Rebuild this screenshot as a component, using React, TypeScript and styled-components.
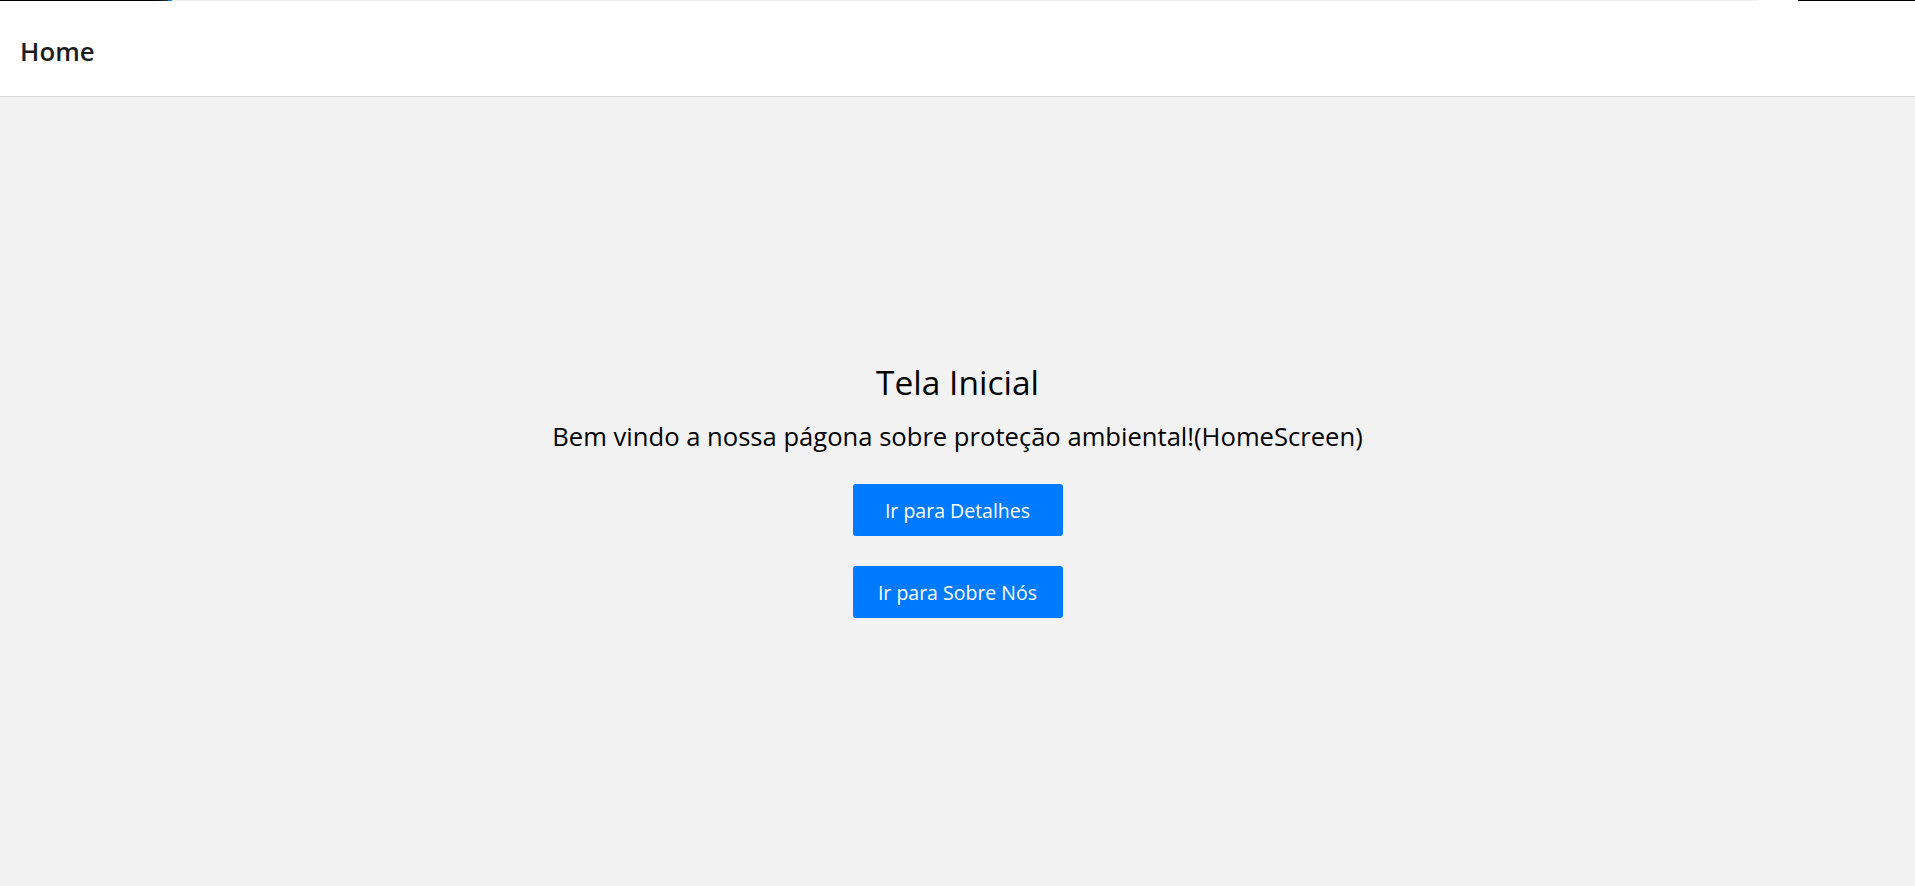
import React from "react";
import styled, { createGlobalStyle } from "styled-components";

const GlobalStyle = createGlobalStyle`
  html, body {
    margin: 0;
    padding: 0;
    background: #f2f2f2;
  }
  body {
    font-family: "Open Sans", "Noto Sans", "Liberation Sans", sans-serif;
  }
  * { box-sizing: border-box; }
`;

const Page = styled.div`
  display: flex;
  flex-direction: column;
  min-height: 100vh;
  background: #f2f2f2;
`;

const Header = styled.header`
  display: flex;
  flex-direction: column;
  height: 97px;
  background: #ffffff;
  border-bottom: 1px solid #d8d8d8;
`;

const Strip = styled.div`
  display: flex;
  height: 1px;
  flex-shrink: 0;
`;

const StripPart = styled.div<{ $w?: number; $bg: string }>`
  flex: ${(p) => (p.$w ? `0 0 ${p.$w}px` : "1 1 auto")};
  background: ${(p) => p.$bg};
`;

const HeaderBar = styled.div`
  flex: 1;
  display: flex;
  align-items: center;
  padding-left: 20px;
  padding-top: 4px;
`;

const HeaderTitle = styled.h1`
  margin: 0;
  font-size: 25.8px;
  font-weight: 600;
  color: #1c1c1e;
  letter-spacing: 0;
`;

const Main = styled.main`
  flex: 1;
  display: flex;
  flex-direction: column;
  align-items: center;
  padding-top: 262px;
`;

const Title = styled.h2`
  margin: 0;
  font-size: 33.5px;
  font-weight: 400;
  line-height: 46px;
  color: #000;
`;

const Subtitle = styled.p`
  margin: 14px 0 0;
  font-size: 25.6px;
  font-weight: 400;
  line-height: 36px;
  color: #000;
`;

const Buttons = styled.div`
  display: flex;
  flex-direction: column;
  gap: 30px;
  margin-top: 29px;
`;

const ActionButton = styled.button`
  width: 210px;
  height: 52px;
  border: none;
  border-radius: 3px;
  background: #007aff;
  color: #ffffff;
  font-family: "Open Sans", "Noto Sans", "Liberation Sans", sans-serif;
  font-size: 19.5px;
  font-weight: 400;
  padding: 0 12px;
  cursor: pointer;
  display: flex;
  align-items: center;
  justify-content: center;
`;

export default function App() {
  return (
    <>
      <GlobalStyle />
      <Page>
        <Header>
          <Strip>
            <StripPart $w={155} $bg="#000" />
            <StripPart $w={13} $bg="linear-gradient(90deg, #000, #1a3a3a)" />
            <StripPart $w={4} $bg="#1a73e8" />
            <StripPart $w={1585} $bg="#eeeeee" />
            <StripPart $w={41} $bg="#ffffff" />
            <StripPart $bg="#000" />
          </Strip>
          <HeaderBar>
            <HeaderTitle>Home</HeaderTitle>
          </HeaderBar>
        </Header>
        <Main>
          <Title>Tela Inicial</Title>
          <Subtitle>Bem vindo a nossa págona sobre proteção ambiental!(HomeScreen)</Subtitle>
          <Buttons>
            <ActionButton>Ir para Detalhes</ActionButton>
            <ActionButton>Ir para Sobre Nós</ActionButton>
          </Buttons>
        </Main>
      </Page>
    </>
  );
}
